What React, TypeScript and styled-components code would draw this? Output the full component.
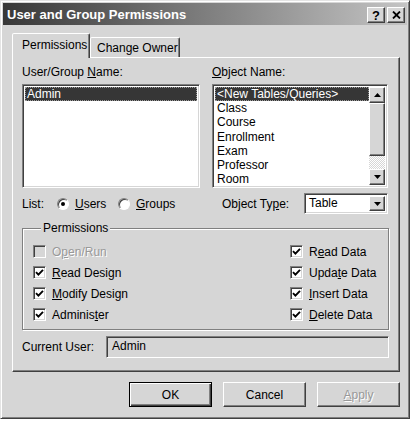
import React from 'react'
import styled, { createGlobalStyle, css } from 'styled-components'

const face = '#d6d6d6'
const shadow = '#808080'
const dark = '#404040'

const GlobalStyle = createGlobalStyle`
  html, body {
    margin: 0;
    padding: 0;
    background: #fff;
  }
  body {
    font-family: "Liberation Sans", Arial, sans-serif;
    font-size: 12px;
    color: #000;
  }
  * {
    box-sizing: border-box;
  }
`

const raised = css`
  border: 1px solid;
  border-color: #fff ${dark} ${dark} #fff;
  box-shadow: inset -1px -1px ${shadow}, inset 1px 1px ${face};
  background: ${face};
`

const sunken = css`
  border: 1px solid;
  border-color: ${shadow} #fff #fff ${shadow};
  box-shadow: inset 1px 1px ${dark}, inset -1px -1px ${face};
`

const Window = styled.div`
  width: 410px;
  height: 419px;
  background: ${face};
  border: 1px solid;
  border-color: #e4e4e4 ${dark} ${dark} #e4e4e4;
  box-shadow: inset 1px 1px #fff, inset -1px -1px ${shadow};
  padding: 2px;
  display: flex;
  flex-direction: column;
`

const TitleBar = styled.div`
  height: 22px;
  display: flex;
  align-items: center;
  padding: 0 2px 0 4px;
  background: linear-gradient(to right, #383838, #c4c4c4);
`

const Title = styled.div`
  flex: 1;
  color: #fff;
  font-weight: bold;
  font-size: 13px;
`

const TitleButton = styled.div`
  ${raised}
  width: 18px;
  height: 16px;
  margin-left: 2px;
  margin-top: 2px;
  display: flex;
  align-items: center;
  justify-content: center;
  font-weight: bold;
  font-size: 13px;
  line-height: 1;
`

const Body = styled.div`
  flex: 1;
  display: flex;
  flex-direction: column;
  padding: 8px 7px 0 9px;
`

const TabStrip = styled.div`
  display: flex;
  align-items: flex-end;
  height: 24px;
`

const Tab = styled.div<{ $active?: boolean }>`
  position: relative;
  z-index: 1;
  background: ${face};
  border: 1px solid;
  border-bottom: none;
  border-color: #fff ${dark} transparent #fff;
  box-shadow: inset -1px 0 ${shadow};
  border-radius: 2px 2px 0 0;
  display: flex;
  align-items: center;
  white-space: nowrap;
  ${({ $active }) => $active ? css`
    width: 78px;
    height: 25px;
    margin-bottom: -1px;
    padding: 0 0 3px 9px;
  ` : css`
    width: 90px;
    height: 20px;
    padding: 0 0 0 6px;
  `}
`

const Panel = styled.div`
  border: 1px solid;
  border-color: #fff ${dark} ${dark} #fff;
  box-shadow: inset -1px -1px ${shadow};
  padding: 7px 10px 13px 9px;
`

const Columns = styled.div`
  display: grid;
  grid-template-columns: 178px 176px;
  column-gap: 12px;
`

const FieldLabel = styled.div`
  height: 15px;
  line-height: 15px;
  margin-bottom: 4px;
`

const ListBox = styled.div`
  ${sunken}
  background: #fff;
  height: 104px;
  padding: 2px;
  display: flex;
`

const ListItems = styled.div`
  flex: 1;
  overflow: hidden;
`

const ListItem = styled.div<{ $selected?: boolean }>`
  height: 14.2px;
  line-height: 14.2px;
  padding-left: 2px;
  white-space: nowrap;
  ${({ $selected }) => $selected && css`
    background: #363636;
    color: #fff;
    outline: 1px dotted #9a9a9a;
    outline-offset: -1px;
  `}
`

const ScrollBar = styled.div`
  width: 16px;
  display: flex;
  flex-direction: column;
`

const ScrollButton = styled.div`
  ${raised}
  height: 16px;
  display: flex;
  align-items: center;
  justify-content: center;
`

const ScrollThumb = styled.div`
  ${raised}
  height: 53px;
`

const ScrollTrack = styled.div`
  flex: 1;
  background-color: ${face};
  background-image: repeating-conic-gradient(#fff 0 25%, ${face} 0 50%);
  background-size: 2px 2px;
`

const ControlRow = styled.div`
  display: flex;
  align-items: center;
  height: 21px;
  margin-top: 5px;
`

const ListLabel = styled.span`
  width: 35px;
`

const RadioItem = styled.label<{ $width?: number }>`
  display: flex;
  align-items: center;
  gap: 6px;
  width: ${({ $width }) => $width ? `${$width}px` : 'auto'};
`

const RadioCircle = styled.span`
  width: 12px;
  height: 12px;
  border-radius: 50%;
  background: #fff;
  border: 1px solid;
  border-color: ${shadow} #fff #fff ${shadow};
  box-shadow: inset 1px 1px ${dark};
  display: flex;
  align-items: center;
  justify-content: center;
`

const RadioDot = styled.span`
  width: 4px;
  height: 4px;
  border-radius: 50%;
  background: #000;
`

const TypeLabel = styled.span`
  margin-left: 10px;
`

const Combo = styled.div`
  ${sunken}
  margin-left: auto;
  width: 84px;
  height: 21px;
  background: #fff;
  padding: 2px;
  display: flex;
`

const ComboText = styled.div`
  flex: 1;
  line-height: 15px;
  padding-left: 2px;
`

const ComboButton = styled(ScrollButton)`
  width: 16px;
  height: auto;
`

const GroupBox = styled.fieldset`
  margin: 7px 0 0;
  padding: 5px 0 4px 10px;
  border: 1px solid ${shadow};
  box-shadow: inset 1px 1px #fff, 1px 1px #fff;
  display: grid;
  grid-template-columns: 257px 1fr;
  grid-auto-rows: 21px;
`

const GroupLegend = styled.legend`
  margin-left: 8px;
  padding: 0 2px;
  line-height: 15px;
  background: ${face};
`

const CheckItem = styled.div<{ $disabled?: boolean }>`
  display: flex;
  align-items: center;
  gap: 6px;
  color: ${({ $disabled }) => $disabled ? '#999' : '#000'};
  text-shadow: ${({ $disabled }) => $disabled ? '1px 1px #fff' : 'none'};
`

const CheckBox = styled.span<{ $disabled?: boolean }>`
  ${sunken}
  width: 13px;
  height: 13px;
  background: ${({ $disabled }) => $disabled ? face : '#fff'};
  display: flex;
  align-items: center;
  justify-content: center;
`

const UserRow = styled.div`
  display: flex;
  align-items: center;
  margin-top: 6px;
`

const UserLabel = styled.span`
  width: 84px;
`

const UserField = styled.div`
  ${sunken}
  flex: 1;
  height: 22px;
  line-height: 18px;
  padding-left: 5px;
  background: ${face};
`

const ButtonRow = styled.div`
  display: flex;
  justify-content: flex-end;
  gap: 11px;
  margin-top: 10px;
`

const Button = styled.div<{ $default?: boolean; $disabled?: boolean }>`
  ${raised}
  width: 83px;
  height: 25px;
  display: flex;
  align-items: center;
  justify-content: center;
  color: ${({ $disabled }) => $disabled ? '#999' : '#000'};
  text-shadow: ${({ $disabled }) => $disabled ? '1px 1px #fff' : 'none'};
  ${({ $default }) => $default && css`
    border-color: #000;
    box-shadow: inset 1px 1px #fff, inset -1px -1px ${dark}, inset -2px -2px ${shadow};
  `}
`

const Arrow = ({ down }: { down?: boolean }) =>
  <svg width='7' height='4' viewBox='0 0 7 4'>
    <polygon points={down ? '0,0 7,0 3.5,4' : '0,4 7,4 3.5,0'} fill='#000' />
  </svg>

const Check = () =>
  <svg width='9' height='9' viewBox='0 0 9 9'>
    <path d='M1 4.2 L3.4 6.6 L8 1.8' stroke='#000' strokeWidth='1.9' fill='none' />
  </svg>

const CloseGlyph = () =>
  <svg width='9' height='8' viewBox='0 0 9 8'>
    <path d='M1 0.5 L8 7.5 M8 0.5 L1 7.5' stroke='#000' strokeWidth='1.8' />
  </svg>

const objects = ['<New Tables/Queries>', 'Class', 'Course', 'Enrollment', 'Exam', 'Professor', 'Room']

const leftPerms: Array<[React.ReactNode, boolean]> = [
  [<>O<u>p</u>en/Run</>, false],
  [<><u>R</u>ead Design</>, true],
  [<><u>M</u>odify Design</>, true],
  [<>Adminis<u>t</u>er</>, true]
]

const rightPerms: Array<React.ReactNode> = [
  <>R<u>e</u>ad Data</>,
  <>Upda<u>t</u>e Data</>,
  <><u>I</u>nsert Data</>,
  <><u>D</u>elete Data</>
]

const App = () =>
  <>
    <GlobalStyle />
    <Window>
      <TitleBar>
        <Title>User and Group Permissions</Title>
        <TitleButton>?</TitleButton>
        <TitleButton><CloseGlyph /></TitleButton>
      </TitleBar>
      <Body>
        <TabStrip>
          <Tab $active>Permissions</Tab>
          <Tab>Change Owner</Tab>
        </TabStrip>
        <Panel>
          <Columns>
            <div>
              <FieldLabel>User/Group <u>N</u>ame:</FieldLabel>
              <ListBox>
                <ListItems>
                  <ListItem $selected>Admin</ListItem>
                </ListItems>
              </ListBox>
            </div>
            <div>
              <FieldLabel><u>O</u>bject Name:</FieldLabel>
              <ListBox>
                <ListItems>
                  {objects.map((name, i) =>
                    <ListItem key={name} $selected={i === 0}>{name}</ListItem>)}
                </ListItems>
                <ScrollBar>
                  <ScrollButton><Arrow /></ScrollButton>
                  <ScrollThumb />
                  <ScrollTrack />
                  <ScrollButton><Arrow down /></ScrollButton>
                </ScrollBar>
              </ListBox>
            </div>
          </Columns>
          <Columns>
            <ControlRow>
              <ListLabel>List:</ListLabel>
              <RadioItem $width={61}>
                <RadioCircle><RadioDot /></RadioCircle>
                <span><u>U</u>sers</span>
              </RadioItem>
              <RadioItem>
                <RadioCircle />
                <span><u>G</u>roups</span>
              </RadioItem>
            </ControlRow>
            <ControlRow>
              <TypeLabel>Object Ty<u>p</u>e:</TypeLabel>
              <Combo>
                <ComboText>Table</ComboText>
                <ComboButton><Arrow down /></ComboButton>
              </Combo>
            </ControlRow>
          </Columns>
          <GroupBox>
            <GroupLegend>Permissions</GroupLegend>
            {leftPerms.map(([label, checked], i) =>
              <React.Fragment key={i}>
                <CheckItem $disabled={!checked}>
                  <CheckBox $disabled={!checked}>{checked && <Check />}</CheckBox>
                  <span>{label}</span>
                </CheckItem>
                <CheckItem>
                  <CheckBox><Check /></CheckBox>
                  <span>{rightPerms[i]}</span>
                </CheckItem>
              </React.Fragment>)}
          </GroupBox>
          <UserRow>
            <UserLabel>Current User:</UserLabel>
            <UserField>Admin</UserField>
          </UserRow>
        </Panel>
        <ButtonRow>
          <Button $default>OK</Button>
          <Button>Cancel</Button>
          <Button $disabled><span><u>A</u>pply</span></Button>
        </ButtonRow>
      </Body>
    </Window>
  </>

export default App
